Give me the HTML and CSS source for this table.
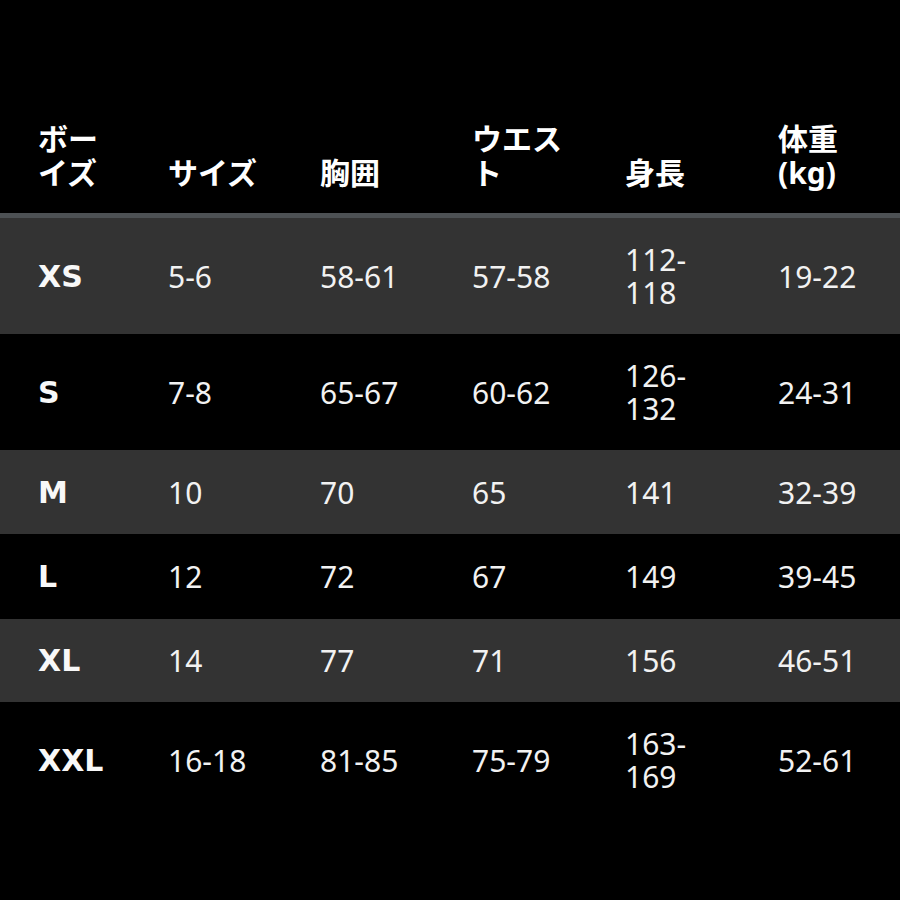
FILE: index.html
```html
<!DOCTYPE html>
<html lang="ja">
<head>
<meta charset="utf-8">
<link rel="stylesheet" href="styles.css">
</head>
<body>
<div class="table">
  <div class="row head">
    <div class="cell">ボー<br>イズ</div>
    <div class="cell">サイズ</div>
    <div class="cell">胸囲</div>
    <div class="cell">ウエス<br>ト</div>
    <div class="cell">身長</div>
    <div class="cell">体重<br>(kg)</div>
  </div>
  <div class="row tall alt">
    <div class="cell first">XS</div>
    <div class="cell">5-6</div>
    <div class="cell">58-61</div>
    <div class="cell">57-58</div>
    <div class="cell">112-<br>118</div>
    <div class="cell">19-22</div>
  </div>
  <div class="row tall">
    <div class="cell first">S</div>
    <div class="cell">7-8</div>
    <div class="cell">65-67</div>
    <div class="cell">60-62</div>
    <div class="cell">126-<br>132</div>
    <div class="cell">24-31</div>
  </div>
  <div class="row short alt">
    <div class="cell first">M</div>
    <div class="cell">10</div>
    <div class="cell">70</div>
    <div class="cell">65</div>
    <div class="cell">141</div>
    <div class="cell">32-39</div>
  </div>
  <div class="row short l">
    <div class="cell first">L</div>
    <div class="cell">12</div>
    <div class="cell">72</div>
    <div class="cell">67</div>
    <div class="cell">149</div>
    <div class="cell">39-45</div>
  </div>
  <div class="row short alt xl">
    <div class="cell first">XL</div>
    <div class="cell">14</div>
    <div class="cell">77</div>
    <div class="cell">71</div>
    <div class="cell">156</div>
    <div class="cell">46-51</div>
  </div>
  <div class="row tall">
    <div class="cell first">XXL</div>
    <div class="cell">16-18</div>
    <div class="cell">81-85</div>
    <div class="cell">75-79</div>
    <div class="cell">163-<br>169</div>
    <div class="cell">52-61</div>
  </div>
</div>
</body>
</html>
```
FILE: styles.css
```css
html, body {
  margin: 0;
  padding: 0;
  background: #000;
}
body {
  width: 900px;
  height: 900px;
  overflow: hidden;
  font-family: "Noto Sans", "Noto Sans CJK JP", sans-serif;
  color: #f2f2f2;
}
.table {
  display: flex;
  flex-direction: column;
}
.row {
  display: grid;
  grid-template-columns: 130px 152px 152px 153px 153px 1fr;
  padding-left: 38px;
  align-items: center;
  font-size: 30px;
  line-height: 33px;
}
.row.head {
  height: 190px;
  align-items: end;
  padding-bottom: 23px;
  font-size: 30px;
  line-height: 34px;
  font-weight: 700;
  color: #fff;
  border-bottom: 5px solid #4d5154;
}
.row.tall {
  height: 116px;
}
.row.short {
  height: 84px;
}
.row.l {
  height: 85px;
}
.row.xl {
  height: 83px;
}
.row.alt {
  background: #333333;
}
.cell.first {
  font-family: "DejaVu Sans", "Noto Sans", sans-serif;
  font-size: 30px;
  font-weight: 700;
  color: #f8f8f8;
}
```
